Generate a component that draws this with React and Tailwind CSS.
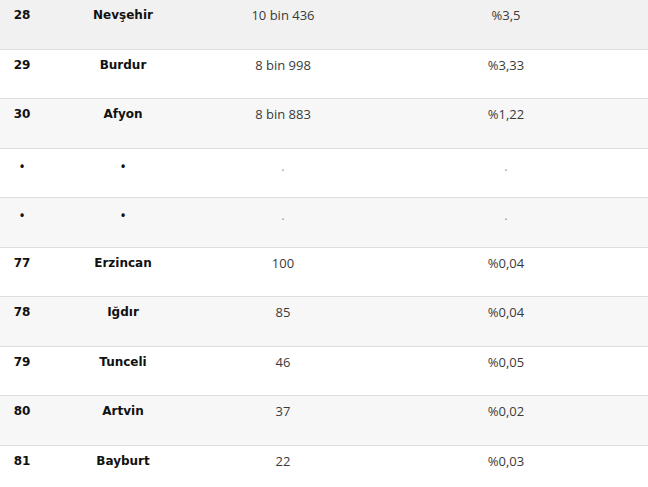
const ROWS = [
  { rank: '28', city: 'Nevşehir', count: '10 bin 436', pct: '%3,5', bg: 'bg-[#f1f1f1]', h: 'h-[50px]' },
  { rank: '29', city: 'Burdur', count: '8 bin 998', pct: '%3,33', bg: 'bg-white', h: 'h-[49px]' },
  { rank: '30', city: 'Afyon', count: '8 bin 883', pct: '%1,22', bg: 'bg-[#f7f7f7]', h: 'h-[50px]' },
  { dots: true, bg: 'bg-white', h: 'h-[49px]' },
  { dots: true, bg: 'bg-[#f7f7f7]', h: 'h-[50px]' },
  { rank: '77', city: 'Erzincan', count: '100', pct: '%0,04', bg: 'bg-white', h: 'h-[49px]' },
  { rank: '78', city: 'Iğdır', count: '85', pct: '%0,04', bg: 'bg-[#f7f7f7]', h: 'h-[50px]' },
  { rank: '79', city: 'Tunceli', count: '46', pct: '%0,05', bg: 'bg-white', h: 'h-[49px]' },
  { rank: '80', city: 'Artvin', count: '37', pct: '%0,02', bg: 'bg-[#f7f7f7]', h: 'h-[50px]' },
  { rank: '81', city: 'Bayburt', count: '22', pct: '%0,03', bg: 'bg-white', h: 'h-[49px]' },
];

function Row({ row }) {
  const bold = "font-['DejaVu_Sans',sans-serif] font-bold text-[12px] text-[#111]";
  const light = "font-['Open_Sans',sans-serif] font-normal text-[13px] text-[#3a3a3a]";

  return (
    <div className={`grid grid-cols-[44px_158px_162px_1fr] border-b border-[#dedede] pt-[5px] leading-5 ${row.bg} ${row.h}`}>
      {row.dots ? (
        <>
          <div className="pt-[2px] text-center text-[15px] text-[#111]">•</div>
          <div className="pt-[2px] text-center text-[15px] text-[#111]">•</div>
          <div className={`pt-[2px] text-center ${light} text-[#999]`}>.</div>
          <div className={`pt-[2px] text-center ${light} text-[#999]`}>.</div>
        </>
      ) : (
        <>
          <div className={`text-center ${bold}`}>{row.rank}</div>
          <div className={`text-center ${bold}`}>{row.city}</div>
          <div className={`text-center ${light}`}>{row.count}</div>
          <div className={`text-center ${light}`}>{row.pct}</div>
        </>
      )}
    </div>
  );
}

export default function App() {
  return (
    <div className="w-[648px] h-[487px] overflow-hidden bg-white">
      {ROWS.map((row, i) => (
        <Row key={i} row={row} />
      ))}
    </div>
  );
}
